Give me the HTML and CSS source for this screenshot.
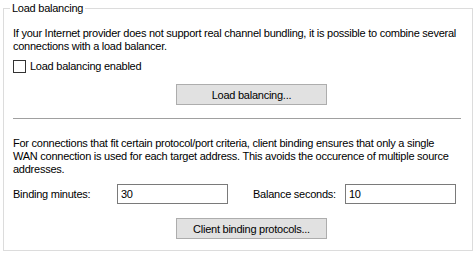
FILE: index.html
```html
<!DOCTYPE html>
<html>
<head>
<meta charset="utf-8">
<link rel="stylesheet" href="styles.css">
</head>
<body>
<fieldset class="group">
  <legend class="group-title">Load balancing</legend>
  <p class="desc"><span class="line">If your Internet provider does not support real channel bundling, it is possible to combine several</span><span class="line">connections with a load balancer.</span></p>
  <label class="check"><span class="box"></span><span class="check-label">Load balancing enabled</span></label>
  <div class="btn-row"><button class="btn">Load balancing...</button></div>
  <hr class="sep">
  <p class="desc desc-2"><span class="line">For connections that fit certain protocol/port criteria, client binding ensures that only a single</span><span class="line">WAN connection is used for each target address. This avoids the occurence of multiple source</span><span class="line">addresses.</span></p>
  <div class="fields">
    <span class="field-label">Binding minutes:</span>
    <input class="field-input" value="30">
    <span class="spacer"></span>
    <span class="field-label">Balance seconds:</span>
    <input class="field-input" value="10">
  </div>
  <div class="btn-row btn-row-2"><button class="btn">Client binding protocols...</button></div>
</fieldset>
</body>
</html>
```
FILE: styles.css
```css
html, body {
  margin: 0;
  padding: 0;
  background: #ffffff;
}
body {
  font-family: "Liberation Sans", Arial, sans-serif;
  font-size: 11px;
  line-height: 13px;
  letter-spacing: -0.25px;
  color: #000000;
  padding: 2px 3px 0 3px;
  width: 470px;
}
.group {
  margin: 0;
  border: 1px solid #dcdcdc;
  padding: 12px 11px 11px 9px;
  min-width: 0;
}
.group-title {
  margin-left: -3px;
  padding: 0 2px;
  line-height: 13px;
}
.desc {
  margin: 0;
}
.line {
  display: block;
  white-space: nowrap;
}
.check {
  display: flex;
  align-items: center;
  gap: 4px;
  margin-top: 6px;
  height: 15px;
}
.box {
  width: 11px;
  height: 11px;
  border: 1px solid #333333;
  background: #ffffff;
  flex: none;
}
.btn-row {
  margin-top: 10px;
  display: flex;
}
.btn {
  margin-left: 163px;
  width: 151px;
  height: 21px;
  box-sizing: border-box;
  border: 1px solid #adadad;
  background: #e1e1e1;
  font-family: inherit;
  font-size: 11px;
  letter-spacing: inherit;
  color: #000000;
  padding: 0;
  border-radius: 0;
}
.sep {
  margin: 13px 0 0 0;
  border: 0;
  height: 1px;
  background: #a0a0a0;
}
.desc-2 {
  margin-top: 18px;
}
.fields {
  margin-top: 8px;
  display: grid;
  grid-template-columns: 104px 111px 25px 92px 111px;
  align-items: center;
  height: 20px;
}
.field-input {
  box-sizing: border-box;
  width: 111px;
  height: 20px;
  border: 1px solid #7a7a7a;
  padding: 0 3px;
  margin: 0;
  font-family: inherit;
  font-size: 11px;
  letter-spacing: inherit;
  color: #000000;
  outline: none;
}
.btn-row-2 {
  margin-top: 14px;
}
```
